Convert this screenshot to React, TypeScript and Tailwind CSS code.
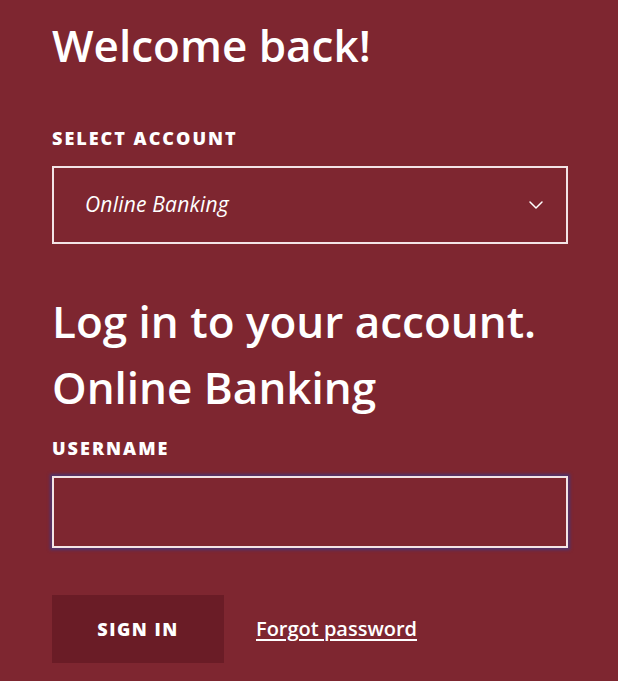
import { ChevronDown } from "lucide-react"

const App = () => {
  return (
    <div className="min-h-screen w-full bg-[#7e2630] text-white font-['Open_Sans',sans-serif] px-[52px] pt-[16px]">
      <h1 className="text-[44px] font-semibold leading-[58px]">Welcome back!</h1>

      <label className="block mt-[52px] text-[18px] font-extrabold tracking-[2px] leading-[24px]">SELECT ACCOUNT</label>
      <div className="mt-[16px] h-[78px] w-[516px] border-2 border-[#f3e4e6] flex items-center justify-between pl-[31px] pr-[18px]">
        <span className="italic text-[21px] tracking-[0.2px]">Online Banking</span>
        <ChevronDown className="size-[24px]" strokeWidth={1.5} />
      </div>

      <h2 className="mt-[44px] text-[44px] font-semibold leading-[66px]">Log in to your account.</h2>
      <h2 className="text-[44px] font-semibold leading-[66px]">Online Banking</h2>

      <label className="block mt-[16px] text-[18px] font-extrabold tracking-[2px] leading-[24px]">USERNAME</label>
      <input
        type="text"
        className="mt-[16px] block h-[72px] w-[516px] bg-transparent border-2 border-[#f3e4e6] shadow-[0_0_3px_2px_#4e3470] outline-none"
      />

      <div className="mt-[47px] flex items-center gap-[32px]">
        <button className="h-[68px] w-[172px] bg-[#6a1c26] text-[18px] font-extrabold tracking-[1.5px]">SIGN IN</button>
        <a href="#" className="text-[20px] font-semibold underline underline-offset-[3px]">Forgot password</a>
      </div>
    </div>
  )
}

export default App
